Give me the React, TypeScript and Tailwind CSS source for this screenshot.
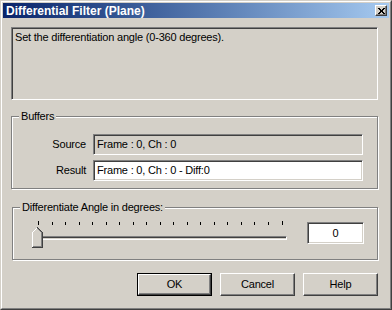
import React from 'react';

const sunken =
  'border border-t-[#808080] border-l-[#808080] border-r-white border-b-white shadow-[inset_1px_1px_0_#404040,inset_-1px_-1px_0_#d4d0c8]';
const raised =
  'border border-t-white border-l-white border-r-[#404040] border-b-[#404040] shadow-[inset_-1px_-1px_0_#808080]';
const etched =
  'border border-[#808080] shadow-[inset_1px_1px_0_#fff,1px_1px_0_#fff]';

function GroupBox({ label, className, children }: { label: string; className: string; children: React.ReactNode }) {
  return (
    <div className={`relative ${etched} ${className}`}>
      <span className="absolute left-[7px] top-[-8px] bg-[#d4d0c8] px-[2px] leading-[14px]">{label}</span>
      {children}
    </div>
  );
}

function Button({ label, isDefault }: { label: string; isDefault?: boolean }) {
  if (isDefault) {
    return (
      <div className="w-[75px] h-[23px] border border-black">
        <div className={`h-full flex items-center justify-center ${raised}`}>{label}</div>
      </div>
    );
  }
  return <div className={`w-[75px] h-[23px] flex items-center justify-center ${raised}`}>{label}</div>;
}

function Slider() {
  const ticks = Array.from({ length: 19 }, (_, i) => 12 + i * 13.53);
  return (
    <div className="relative w-[270px] h-[30px]">
      <svg width="270" height="8" className="block" shapeRendering="crispEdges">
        {ticks.map((x, i) => (
          <rect
            key={i}
            x={Math.round(x)}
            y={i === 0 || i === 18 ? 1 : 2}
            width="1"
            height={i === 0 || i === 18 ? 4 : 3}
            fill="#000"
          />
        ))}
      </svg>
      <div className="mt-[8px] ml-[8px] w-[253px] h-[4px] border border-t-[#808080] border-l-[#808080] border-r-white border-b-white shadow-[inset_1px_1px_0_#404040]" />
      <svg width="12" height="21" className="absolute left-[6px] top-[7px]" shapeRendering="crispEdges">
        <polygon points="0,5 5,0 6,0 11,5 11,20 0,20" fill="#d4d0c8" />
        <polyline points="0.5,20 0.5,5.5 5.5,0.5" fill="none" stroke="#fff" />
        <polyline points="5.5,0.5 10.5,5.5 10.5,20.5 0,20.5" fill="none" stroke="#404040" />
        <polyline points="5.5,1.5 9.5,5.5 9.5,19.5 1,19.5" fill="none" stroke="#808080" />
      </svg>
    </div>
  );
}

export default function App() {
  return (
    <div className="w-[392px] h-[310px] bg-[#d4d0c8] border border-t-[#d4d0c8] border-l-[#d4d0c8] border-r-[#404040] border-b-[#404040] font-['Liberation_Sans',Arial,sans-serif] text-[11px] tracking-[-0.2px] text-black">
      <div className="h-full flex flex-col border border-t-white border-l-white border-r-[#808080] border-b-[#808080] p-px">
        <div className="h-[15px] flex items-center justify-between bg-gradient-to-r from-[#0a246a] to-[#a6caf0] pl-[3px] pr-[2px]">
          <span className="text-white font-bold text-[12px] tracking-normal leading-none">Differential Filter (Plane)</span>
          <div className={`w-[12px] h-[11px] flex items-center justify-center bg-[#d4d0c8] ${raised}`}>
            <svg width="7" height="6" viewBox="0 0 7 6" shapeRendering="crispEdges">
              <path d="M0 0h2v1h-2zM5 0h2v1h-2zM1 1h2v1h-2zM4 1h2v1h-2zM2 2h3v2h-3zM1 4h2v1h-2zM4 4h2v1h-2zM0 5h2v1h-2zM5 5h2v1h-2z" fill="#000" />
            </svg>
          </div>
        </div>

        <div className="flex flex-col pl-[8px]">
          <div className={`mt-[9px] w-[367px] h-[73px] ${sunken} px-[3px] py-[2px] leading-[14px]`}>
            Set the differentiation angle (0-360 degrees).
          </div>

          <GroupBox label="Buffers" className="mt-[16px] w-[367px] h-[73px] pt-[17px]">
            <div className="flex items-center">
              <span className="w-[74px] text-right">Source</span>
              <div className={`ml-[7px] w-[270px] h-[21px] ${sunken} px-[3px] flex items-center`}>Frame : 0, Ch : 0</div>
            </div>
            <div className="flex items-center mt-[5px]">
              <span className="w-[74px] text-right">Result</span>
              <div className={`ml-[7px] w-[270px] h-[21px] ${sunken} bg-white px-[3px] flex items-center`}>
                Frame : 0, Ch : 0 - Diff:0
              </div>
            </div>
          </GroupBox>

          <GroupBox label="Differentiate Angle in degrees:" className="mt-[18px] ml-px w-[366px] h-[53px] pt-[12px] pl-[13px]">
            <div className="flex items-start">
              <Slider />
              <div className={`ml-[11px] mt-[2px] w-[57px] h-[22px] ${sunken} bg-white flex items-center justify-center`}>0</div>
            </div>
          </GroupBox>

          <div className="mt-[13px] w-[367px] flex justify-end gap-[8px]">
            <Button label="OK" isDefault />
            <Button label="Cancel" />
            <Button label="Help" />
          </div>
        </div>
      </div>
    </div>
  );
}
